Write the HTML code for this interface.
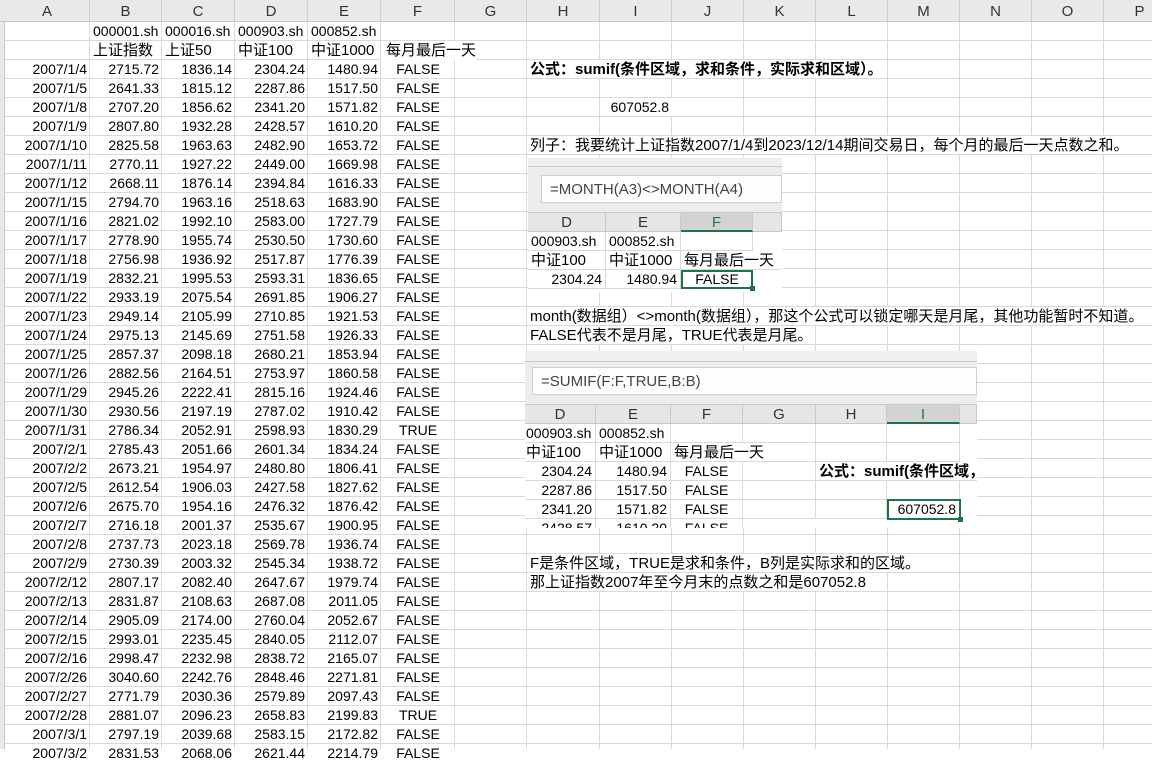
<!DOCTYPE html>
<html><head><meta charset="utf-8"><style>
*{margin:0;padding:0;box-sizing:border-box}
body{width:1152px;height:749px;overflow:hidden;position:relative;background:#fff;font-family:"Liberation Sans","Noto Sans CJK SC",sans-serif;font-size:14px;color:#000}
.grid{position:absolute;left:0;top:22px;width:1152px;height:727px;background:repeating-linear-gradient(to bottom,transparent 0 18px,#d9d9d9 18px 19px)}
.v{position:absolute;top:0;width:1px;height:749px;background:#d9d9d9}
.hdr{position:absolute;left:0;top:0;width:1152px;height:22px;background:#e9e9e9;border-bottom:1px solid #c8c8c8}
.hdr span{position:absolute;top:0;height:22px;line-height:23px;text-align:center;color:#333;border-right:1px solid #cfcfcf;font-size:15px}
.strip{position:absolute;left:0;top:22px;width:5px;height:727px;background:#e9e9e9;border-right:1px solid #c8c8c8}
.r{position:absolute;left:5px;height:19px;line-height:19px;white-space:nowrap;margin-top:2px}
.r span{position:absolute;top:0;text-align:right;padding-right:3px}
.r span:nth-child(1){left:0;width:85px}
.r span:nth-child(2){left:85px;width:72px}
.r span:nth-child(3){left:157px;width:73px}
.r span:nth-child(4){left:230px;width:73px}
.r span:nth-child(5){left:303px;width:73px}
.r span:nth-child(6){left:376px;width:74px;text-align:center;padding:0}
.cj{font-size:15px}
.t{position:absolute;height:18px;line-height:19px;white-space:nowrap;background:#fff;padding-left:3px;margin-top:2px;font-size:15px}
.img{position:absolute;background:#fff;overflow:hidden}
.img .s1{position:absolute;left:0;top:0;right:0;background:#efefef}
.img .s2{position:absolute;left:0;right:0;background:#e4e4e4;border-top:1px solid #c8c8c8;border-bottom:1px solid #c8c8c8}
.fb{position:absolute;background:#fdfdfd;border:1px solid #d0d0d0;color:#444;font-size:15px;padding-left:8px}
.ch{position:absolute;background:#e6e6e6;text-align:center;color:#333;border-right:1px solid #c8c8c8;font-size:15px;line-height:19px}
.ch.sel{background:#d3d3d3;border-bottom:2px solid #217346;color:#217346}
.c{position:absolute;height:19px;line-height:19px;white-space:nowrap;padding:0 3px;border-right:1px solid #d9d9d9;border-bottom:1px solid #d9d9d9}
.sel2{border:2px solid #217346!important}
</style></head><body>
<div class="grid"></div>
<div class="v" style="left:89px"></div><div class="v" style="left:161px"></div><div class="v" style="left:234px"></div><div class="v" style="left:307px"></div><div class="v" style="left:380px"></div><div class="v" style="left:454px"></div><div class="v" style="left:526px"></div><div class="v" style="left:599px"></div><div class="v" style="left:671px"></div><div class="v" style="left:743px"></div><div class="v" style="left:815px"></div><div class="v" style="left:887px"></div><div class="v" style="left:959px"></div><div class="v" style="left:1031px"></div><div class="v" style="left:1103px"></div>
<div class="hdr">
<span style="left:5px;width:85px">A</span><span style="left:90px;width:72px">B</span><span style="left:162px;width:73px">C</span><span style="left:235px;width:73px">D</span><span style="left:308px;width:73px">E</span><span style="left:381px;width:74px">F</span><span style="left:455px;width:72px">G</span><span style="left:527px;width:73px">H</span><span style="left:600px;width:72px">I</span><span style="left:672px;width:72px">J</span><span style="left:744px;width:72px">K</span><span style="left:816px;width:72px">L</span><span style="left:888px;width:72px">M</span><span style="left:960px;width:72px">N</span><span style="left:1032px;width:72px">O</span><span style="left:1104px;width:72px">P</span>
</div>
<div class="strip"></div>
<div class="r" style="top:20px"><span></span><span style="text-align:left;padding-left:3px">000001.sh</span><span style="text-align:left;padding-left:3px">000016.sh</span><span style="text-align:left;padding-left:3px">000903.sh</span><span style="text-align:left;padding-left:3px">000852.sh</span><span></span></div>
<div class="r cj" style="top:39px"><span></span><span style="text-align:left;padding-left:3px">上证指数</span><span style="text-align:left;padding-left:3px">上证50</span><span style="text-align:left;padding-left:3px">中证100</span><span style="text-align:left;padding-left:3px">中证1000</span><span style="text-align:left;padding-left:5px;width:95px;background:#fff">每月最后一天</span></div>
<div class="r" style="top:58px"><span>2007/1/4</span><span>2715.72</span><span>1836.14</span><span>2304.24</span><span>1480.94</span><span>FALSE</span></div>
<div class="r" style="top:77px"><span>2007/1/5</span><span>2641.33</span><span>1815.12</span><span>2287.86</span><span>1517.50</span><span>FALSE</span></div>
<div class="r" style="top:96px"><span>2007/1/8</span><span>2707.20</span><span>1856.62</span><span>2341.20</span><span>1571.82</span><span>FALSE</span></div>
<div class="r" style="top:115px"><span>2007/1/9</span><span>2807.80</span><span>1932.28</span><span>2428.57</span><span>1610.20</span><span>FALSE</span></div>
<div class="r" style="top:134px"><span>2007/1/10</span><span>2825.58</span><span>1963.63</span><span>2482.90</span><span>1653.72</span><span>FALSE</span></div>
<div class="r" style="top:153px"><span>2007/1/11</span><span>2770.11</span><span>1927.22</span><span>2449.00</span><span>1669.98</span><span>FALSE</span></div>
<div class="r" style="top:172px"><span>2007/1/12</span><span>2668.11</span><span>1876.14</span><span>2394.84</span><span>1616.33</span><span>FALSE</span></div>
<div class="r" style="top:191px"><span>2007/1/15</span><span>2794.70</span><span>1963.16</span><span>2518.63</span><span>1683.90</span><span>FALSE</span></div>
<div class="r" style="top:210px"><span>2007/1/16</span><span>2821.02</span><span>1992.10</span><span>2583.00</span><span>1727.79</span><span>FALSE</span></div>
<div class="r" style="top:229px"><span>2007/1/17</span><span>2778.90</span><span>1955.74</span><span>2530.50</span><span>1730.60</span><span>FALSE</span></div>
<div class="r" style="top:248px"><span>2007/1/18</span><span>2756.98</span><span>1936.92</span><span>2517.87</span><span>1776.39</span><span>FALSE</span></div>
<div class="r" style="top:267px"><span>2007/1/19</span><span>2832.21</span><span>1995.53</span><span>2593.31</span><span>1836.65</span><span>FALSE</span></div>
<div class="r" style="top:286px"><span>2007/1/22</span><span>2933.19</span><span>2075.54</span><span>2691.85</span><span>1906.27</span><span>FALSE</span></div>
<div class="r" style="top:305px"><span>2007/1/23</span><span>2949.14</span><span>2105.99</span><span>2710.85</span><span>1921.53</span><span>FALSE</span></div>
<div class="r" style="top:324px"><span>2007/1/24</span><span>2975.13</span><span>2145.69</span><span>2751.58</span><span>1926.33</span><span>FALSE</span></div>
<div class="r" style="top:343px"><span>2007/1/25</span><span>2857.37</span><span>2098.18</span><span>2680.21</span><span>1853.94</span><span>FALSE</span></div>
<div class="r" style="top:362px"><span>2007/1/26</span><span>2882.56</span><span>2164.51</span><span>2753.97</span><span>1860.58</span><span>FALSE</span></div>
<div class="r" style="top:381px"><span>2007/1/29</span><span>2945.26</span><span>2222.41</span><span>2815.16</span><span>1924.46</span><span>FALSE</span></div>
<div class="r" style="top:400px"><span>2007/1/30</span><span>2930.56</span><span>2197.19</span><span>2787.02</span><span>1910.42</span><span>FALSE</span></div>
<div class="r" style="top:419px"><span>2007/1/31</span><span>2786.34</span><span>2052.91</span><span>2598.93</span><span>1830.29</span><span>TRUE</span></div>
<div class="r" style="top:438px"><span>2007/2/1</span><span>2785.43</span><span>2051.66</span><span>2601.34</span><span>1834.24</span><span>FALSE</span></div>
<div class="r" style="top:457px"><span>2007/2/2</span><span>2673.21</span><span>1954.97</span><span>2480.80</span><span>1806.41</span><span>FALSE</span></div>
<div class="r" style="top:476px"><span>2007/2/5</span><span>2612.54</span><span>1906.03</span><span>2427.58</span><span>1827.62</span><span>FALSE</span></div>
<div class="r" style="top:495px"><span>2007/2/6</span><span>2675.70</span><span>1954.16</span><span>2476.32</span><span>1876.42</span><span>FALSE</span></div>
<div class="r" style="top:514px"><span>2007/2/7</span><span>2716.18</span><span>2001.37</span><span>2535.67</span><span>1900.95</span><span>FALSE</span></div>
<div class="r" style="top:533px"><span>2007/2/8</span><span>2737.73</span><span>2023.18</span><span>2569.78</span><span>1936.74</span><span>FALSE</span></div>
<div class="r" style="top:552px"><span>2007/2/9</span><span>2730.39</span><span>2003.32</span><span>2545.34</span><span>1938.72</span><span>FALSE</span></div>
<div class="r" style="top:571px"><span>2007/2/12</span><span>2807.17</span><span>2082.40</span><span>2647.67</span><span>1979.74</span><span>FALSE</span></div>
<div class="r" style="top:590px"><span>2007/2/13</span><span>2831.87</span><span>2108.63</span><span>2687.08</span><span>2011.05</span><span>FALSE</span></div>
<div class="r" style="top:609px"><span>2007/2/14</span><span>2905.09</span><span>2174.00</span><span>2760.04</span><span>2052.67</span><span>FALSE</span></div>
<div class="r" style="top:628px"><span>2007/2/15</span><span>2993.01</span><span>2235.45</span><span>2840.05</span><span>2112.07</span><span>FALSE</span></div>
<div class="r" style="top:647px"><span>2007/2/16</span><span>2998.47</span><span>2232.98</span><span>2838.72</span><span>2165.07</span><span>FALSE</span></div>
<div class="r" style="top:666px"><span>2007/2/26</span><span>3040.60</span><span>2242.76</span><span>2848.46</span><span>2271.81</span><span>FALSE</span></div>
<div class="r" style="top:685px"><span>2007/2/27</span><span>2771.79</span><span>2030.36</span><span>2579.89</span><span>2097.43</span><span>FALSE</span></div>
<div class="r" style="top:704px"><span>2007/2/28</span><span>2881.07</span><span>2096.23</span><span>2658.83</span><span>2199.83</span><span>TRUE</span></div>
<div class="r" style="top:723px"><span>2007/3/1</span><span>2797.19</span><span>2039.68</span><span>2583.15</span><span>2172.82</span><span>FALSE</span></div>
<div class="r" style="top:742px"><span>2007/3/2</span><span>2831.53</span><span>2068.06</span><span>2621.44</span><span>2214.79</span><span>FALSE</span></div>

<div class="t" style="left:527px;top:58px;font-weight:bold">公式：sumif(条件区域，求和条件，实际求和区域）。</div>
<div class="t" style="left:600px;top:96px;width:72px;text-align:right;padding-right:3px;font-size:14px">607052.8</div>
<div class="t" style="left:527px;top:134px">列子：我要统计上证指数2007/1/4到2023/12/14期间交易日，每个月的最后一天点数之和。</div>
<div class="t" style="left:527px;top:305px">month(数据组）&lt;&gt;month(数据组），那这个公式可以锁定哪天是月尾，其他功能暂时不知道。</div>
<div class="t" style="left:527px;top:324px">FALSE代表不是月尾，TRUE代表是月尾。</div>
<div class="t" style="left:527px;top:552px">F是条件区域，TRUE是求和条件，B列是实际求和的区域。</div>
<div class="t" style="left:527px;top:571px">那上证指数2007年至今月末的点数之和是607052.8</div>

<!-- screenshot 1 -->
<div class="img" style="left:528px;top:158px;width:254px;height:134px">
<div class="s1" style="height:8px"></div>
<div class="s2" style="top:8px;height:47px;background:#ededed"></div>
<div class="fb" style="left:13px;top:17px;width:241px;height:28px;line-height:27px">=MONTH(A3)&lt;&gt;MONTH(A4)</div>
<div style="position:absolute;left:0;top:55px;width:254px;height:79px;background:#fff"></div>
<div class="ch" style="left:0;top:55px;width:78px;height:19px;border-bottom:1px solid #c8c8c8">D</div>
<div class="ch" style="left:78px;top:55px;width:75px;height:19px;border-bottom:1px solid #c8c8c8">E</div>
<div class="ch sel" style="left:153px;top:55px;width:72px;height:19px">F</div>
<div class="ch" style="left:225px;top:55px;width:29px;height:19px;border-bottom:1px solid #c8c8c8"></div>
<div class="c" style="left:0;top:74px;width:78px">000903.sh</div>
<div class="c" style="left:78px;top:74px;width:75px">000852.sh</div>
<div class="c" style="left:153px;top:74px;width:72px"></div>
<div class="c cj" style="left:0;top:93px;width:78px">中证100</div>
<div class="c cj" style="left:78px;top:93px;width:75px">中证1000</div>
<div class="c cj" style="left:153px;top:93px;width:100px;border-right:none">每月最后一天</div>
<div class="c" style="left:0;top:112px;width:78px;text-align:right">2304.24</div>
<div class="c" style="left:78px;top:112px;width:75px;text-align:right">1480.94</div>
<div class="c sel2" style="left:153px;top:112px;width:72px;text-align:center;line-height:15px">FALSE</div>
<div style="position:absolute;left:222px;top:128px;width:5px;height:5px;background:#217346"></div>
</div>

<!-- screenshot 2 -->
<div class="img" style="left:525px;top:351px;width:452px;height:177px">
<div class="s1" style="height:10px"></div>
<div class="s2" style="top:10px;height:44px;background:#ededed"></div>
<div class="fb" style="left:7px;top:16px;width:445px;height:28px;line-height:27px">=SUMIF(F:F,TRUE,B:B)</div>
<div style="position:absolute;left:0;top:54px;width:452px;height:123px;background:#fff"></div>
<div class="ch" style="left:0;top:54px;width:71px;height:19px;border-bottom:1px solid #c8c8c8">D</div>
<div class="ch" style="left:71px;top:54px;width:75px;height:19px;border-bottom:1px solid #c8c8c8">E</div>
<div class="ch" style="left:146px;top:54px;width:72px;height:19px;border-bottom:1px solid #c8c8c8">F</div>
<div class="ch" style="left:218px;top:54px;width:73px;height:19px;border-bottom:1px solid #c8c8c8">G</div>
<div class="ch" style="left:291px;top:54px;width:71px;height:19px;border-bottom:1px solid #c8c8c8">H</div>
<div class="ch sel" style="left:362px;top:54px;width:73px;height:19px">I</div>
<div class="ch" style="left:435px;top:54px;width:17px;height:19px;border-bottom:1px solid #c8c8c8"></div>
<div class="c" style="left:0;top:73px;width:71px;padding:0 1px">000903.sh</div>
<div class="c" style="left:71px;top:73px;width:75px">000852.sh</div>
<div class="c" style="left:146px;top:73px;width:72px"></div><div class="c" style="left:218px;top:73px;width:73px"></div><div class="c" style="left:291px;top:73px;width:71px"></div><div class="c" style="left:362px;top:73px;width:73px"></div>
<div class="c cj" style="left:0;top:92px;width:71px;padding:0 1px">中证100</div>
<div class="c cj" style="left:71px;top:92px;width:75px">中证1000</div>
<div class="c cj" style="left:146px;top:92px;width:145px">每月最后一天</div>
<div class="c" style="left:291px;top:92px;width:71px"></div><div class="c" style="left:362px;top:92px;width:73px"></div>
<div class="c" style="left:0;top:111px;width:71px;text-align:right">2304.24</div>
<div class="c" style="left:71px;top:111px;width:75px;text-align:right">1480.94</div>
<div class="c" style="left:146px;top:111px;width:72px;text-align:center">FALSE</div>
<div class="c" style="left:218px;top:111px;width:73px"></div>
<div class="c cj" style="left:291px;top:111px;width:161px;font-weight:bold;border-right:none">公式：sumif(条件区域，</div>
<div class="c" style="left:0;top:130px;width:71px;text-align:right">2287.86</div>
<div class="c" style="left:71px;top:130px;width:75px;text-align:right">1517.50</div>
<div class="c" style="left:146px;top:130px;width:72px;text-align:center">FALSE</div>
<div class="c" style="left:218px;top:130px;width:73px"></div><div class="c" style="left:291px;top:130px;width:71px"></div><div class="c" style="left:362px;top:130px;width:73px"></div>
<div class="c" style="left:0;top:149px;width:71px;text-align:right">2341.20</div>
<div class="c" style="left:71px;top:149px;width:75px;text-align:right">1571.82</div>
<div class="c" style="left:146px;top:149px;width:72px;text-align:center">FALSE</div>
<div class="c" style="left:218px;top:149px;width:73px"></div><div class="c" style="left:291px;top:149px;width:71px"></div>
<div class="c sel2" style="left:362px;top:148px;width:74px;height:21px;text-align:right;line-height:17px">607052.8</div>
<div style="position:absolute;left:433px;top:166px;width:5px;height:5px;background:#217346"></div>
<div class="c" style="left:0;top:168px;width:71px;text-align:right;border-bottom:none">2428.57</div>
<div class="c" style="left:71px;top:168px;width:75px;text-align:right;border-bottom:none">1610.20</div>
<div class="c" style="left:146px;top:168px;width:72px;text-align:center;border-bottom:none">FALSE</div>
</div>
</body></html>
